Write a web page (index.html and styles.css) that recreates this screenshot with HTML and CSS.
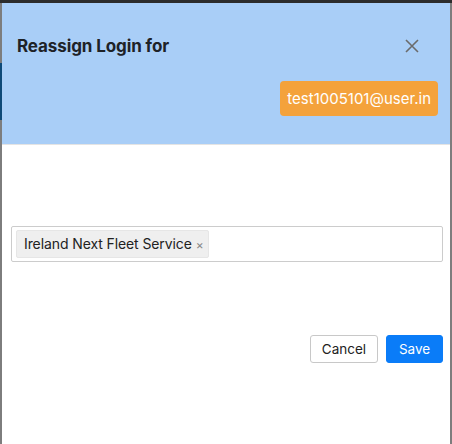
FILE: index.html
```html
<!DOCTYPE html>
<html>
<head>
<meta charset="utf-8">
<link rel="stylesheet" href="styles.css">
</head>
<body>
<div class="topbar"></div>
<div class="stage">
  <div class="backdrop">
    <div class="bd-gray bd-a"></div>
    <div class="bd-blue"></div>
    <div class="bd-gray bd-b"></div>
  </div>
  <div class="modal">
    <div class="modal-header">
      <div class="title-row">
        <h1 class="title">Reassign Login for</h1>
        <button class="close" aria-label="Close">
          <svg width="14" height="14" viewBox="0 0 14 14"><path d="M1 1L13 13M13 1L1 13" stroke="#6b6b6b" stroke-width="1.6" fill="none"/></svg>
        </button>
      </div>
      <div class="badge-row">
        <span class="badge">test1005101@user.in</span>
      </div>
    </div>
    <div class="modal-body">
      <div class="select">
        <span class="tag">Ireland Next Fleet Service <span class="tag-x">×</span></span>
      </div>
      <div class="actions">
        <button class="btn btn-cancel">Cancel</button>
        <button class="btn btn-save">Save</button>
      </div>
    </div>
  </div>
</div>
</body>
</html>
```
FILE: styles.css
```css
html, body {
  margin: 0;
  padding: 0;
  height: 100%;
}
body {
  background: #7d7d7d;
  font-family: Inter, "Noto Sans", sans-serif;
  overflow: hidden;
}
.topbar {
  height: 3px;
  background: #2c2c2c;
}
.stage {
  display: flex;
  height: 441px;
}
.backdrop {
  width: 2px;
  display: flex;
  flex-direction: column;
}
.bd-gray { background: #7d7d7d; }
.bd-a { height: 60px; }
.bd-blue { height: 57px; background: #0e4a78; }
.bd-b { flex: 1; }
.modal {
  width: 448px;
  background: #fff;
  display: flex;
  flex-direction: column;
}
.modal-header {
  background: #a9cef7;
  border-bottom: 1px solid #e4e4e4;
  padding: 30px 12px 28px 15px;
}
.title-row {
  display: flex;
  justify-content: space-between;
  align-items: center;
  height: 26px;
}
.title {
  margin: 0;
  font-size: 17px;
  font-weight: 700;
  letter-spacing: -0.1px;
  color: #1e2227;
}
.close {
  border: 0;
  background: none;
  padding: 0;
  margin-right: 19px;
  width: 14px;
  height: 14px;
  display: flex;
}
.badge-row {
  display: flex;
  justify-content: flex-end;
  margin-top: 22px;
}
.badge {
  background: #f4a23b;
  color: #fff;
  font-size: 15px;
  border-radius: 4px;
  height: 35px;
  line-height: 35px;
  padding: 0 7px;
}
.modal-body {
  padding: 81px 7px 0 9px;
}
.select {
  border: 1px solid #cccccc;
  border-radius: 2px;
  height: 34px;
  display: flex;
  align-items: center;
  padding: 0 4px;
}
.tag {
  background: #efefef;
  border: 1px solid #e6e6e6;
  border-radius: 2px;
  color: #222;
  font-size: 14px;
  letter-spacing: -0.1px;
  height: 26px;
  line-height: 26px;
  padding: 0 5px 0 7px;
}
.tag-x {
  color: #888;
  font-size: 12px;
}
.actions {
  display: flex;
  justify-content: flex-end;
  gap: 8px;
  margin-top: 73px;
}
.btn {
  font-family: Inter, "Noto Sans", sans-serif;
  font-size: 13.5px;
  height: 28px;
  border-radius: 3px;
  padding: 0;
  cursor: pointer;
}
.btn-cancel {
  width: 68px;
  background: #fff;
  border: 1px solid #c8c8c8;
  color: #222;
}
.btn-save {
  width: 57px;
  background: #0a7cf8;
  border: 1px solid #0a7cf8;
  color: #fff;
}
```
